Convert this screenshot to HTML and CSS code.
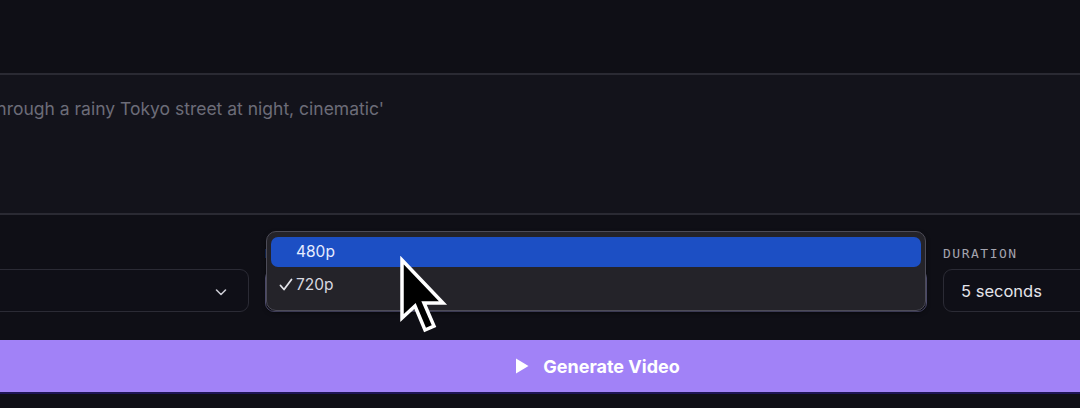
FILE: index.html
```html
<!DOCTYPE html>
<html>
<head>
<meta charset="utf-8">
<link rel="stylesheet" href="styles.css">
</head>
<body>
<div class="page">
  <div class="prompt">
    <p class="placeholder">drone shot flying through a rainy Tokyo street at night, cinematic'</p>
  </div>
  <div class="controls">
    <div class="field field-model">
      <div class="label">MODEL</div>
      <div class="select">
        <span class="value"></span>
        <svg class="chev" width="14" height="14" viewBox="0 0 14 14"><path d="M2.5 5l4.5 4.5L11.5 5" fill="none" stroke="#c9c9d2" stroke-width="1.6" stroke-linecap="round" stroke-linejoin="round"/></svg>
      </div>
    </div>
    <div class="field field-res">
      <div class="label">RESOLUTION</div>
      <div class="select select-open"></div>
      <div class="popup">
        <div class="opt opt-hl">480p</div>
        <div class="opt"><svg class="check" width="14" height="14" viewBox="0 0 14 14"><path d="M1.5 7.5 L5 11.5 L12.5 1.5" fill="none" stroke="#e2e2e8" stroke-width="1.8" stroke-linecap="round" stroke-linejoin="round"/></svg>720p</div>
      </div>
      <svg class="cursor" width="52" height="80" viewBox="0 0 52 80"><path d="M4 4 L4 62 L17 50 L27 74 L36 70 L26 47 L45 47 Z" fill="#000" stroke="#fff" stroke-width="3.5" stroke-linejoin="miter"/></svg>
    </div>
    <div class="field field-dur">
      <div class="label">DURATION</div>
      <div class="select"><span class="value">5 seconds</span></div>
    </div>
  </div>
  <button class="generate"><svg width="14" height="16" viewBox="0 0 14 16"><path d="M1 0.5 L13.5 8 L1 15.5 Z" fill="#fff"/></svg><span>Generate Video</span></button>
  <div class="underline"></div>
</div>
</body>
</html>
```
FILE: styles.css
```css
html, body {
  margin: 0;
  padding: 0;
  background: #0f0f16;
  overflow: hidden;
}
body {
  font-family: Inter, "Noto Sans", sans-serif;
  width: 1080px;
  height: 408px;
}
.page {
  padding-top: 73px;
  overflow: hidden;
  height: 335px;
}
.prompt {
  margin: 0 -30px 0 -30px;
  height: 138px;
  background: #13131b;
  border-top: 2px solid #2a2a33;
  border-bottom: 2px solid #2a2a33;
  overflow: hidden;
}
.placeholder {
  margin: 23px 0 0 -124px;
  font-size: 17.5px;
  color: #6c6c78;
  white-space: nowrap;
}
.controls {
  display: flex;
  gap: 16px;
  margin-left: -60px;
  margin-top: 31px;
}
.field {
  display: flex;
  flex-direction: column;
  position: relative;
  flex-shrink: 0;
}
.field-model { width: 309px; }
.field-res { width: 662px; }
.field-dur { width: 300px; }
.label {
  font-family: "DejaVu Sans Mono", monospace;
  font-size: 13px;
  letter-spacing: 1.5px;
  color: #a3a3ae;
  height: 16px;
  line-height: 16px;
  margin-bottom: 7px;
}
.field-model .label { visibility: hidden; }
.select {
  height: 41px;
  border: 1px solid #2b2b35;
  border-radius: 9px;
  background: #0f0f17;
  display: flex;
  align-items: center;
  justify-content: space-between;
  padding: 0 18px 0 17px;
}
.select-open {
  border-color: #5e5c84;
  border-width: 1.5px;
}
.chev { margin-right: 2px; margin-top: 2px; }
.value {
  font-size: 16.5px;
  color: #e4e4ea;
}
.popup {
  position: absolute;
  left: 1px;
  right: 1px;
  top: -15px;
  height: 70px;
  background: #242329;
  border: 1.5px solid #4d4c58;
  border-radius: 10px;
  padding: 5px 4px 3px;
  box-shadow: 0 2px 4px rgba(0,0,0,0.5);
}
.opt {
  height: 30px;
  line-height: 30px;
  font-size: 15.5px;
  color: #d9d9e0;
  padding-left: 25px;
  border-radius: 7px;
  position: relative;
}
.opt-hl {
  background: #1c4fc4;
  color: #e6ecff;
  margin-bottom: 3px;
}
.check {
  position: absolute;
  left: 8px;
  top: 8px;
}
.cursor {
  position: absolute;
  left: 133px;
  top: 10px;
}
.generate {
  display: flex;
  align-items: center;
  justify-content: center;
  gap: 14px;
  width: 100%;
  height: 52px;
  margin-top: 28px;
  border: none;
  background: #a182f7;
  color: #fff;
  font-family: Inter, sans-serif;
  font-weight: 700;
  font-size: 18px;
  padding: 0 0 0 115px;
}
.underline {
  height: 2px;
  background: #1e1555;
}
```
